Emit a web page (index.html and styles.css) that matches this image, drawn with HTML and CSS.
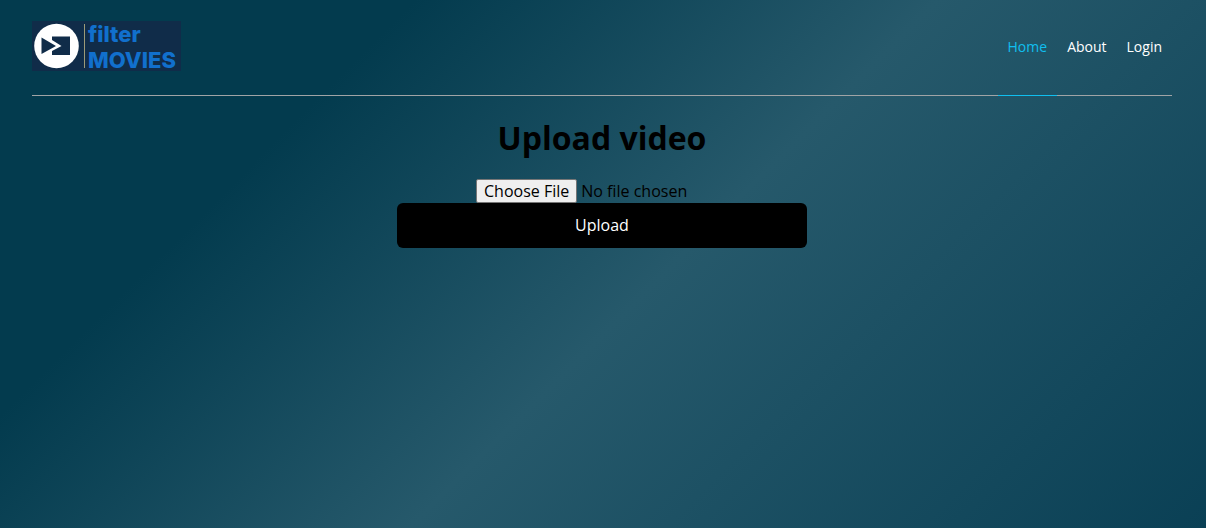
FILE: index.html
```html
<!DOCTYPE html>
<html lang="en">
<head>
<meta charset="utf-8">
<meta name="viewport" content="width=device-width, initial-scale=1">
<title>Upload video</title>
<link rel="stylesheet" href="styles.css">
</head>
<body>
<header class="header">
  <a class="logo" href="#" aria-label="Filter Movies">
    <svg width="149" height="50" viewBox="0 0 149 50">
      <rect class="logo-bg" width="149" height="50"/>
      <circle cx="24.500" cy="25" r="22.300" fill="#fff"/>
      <path class="logo-bg" d="M9.500 16.500 L24 25 L9.500 33 Z M20 15.500 H38 V34 H20 V30 L29.500 25 L20 19 Z"/>
      <path d="M52.500 3 V47" stroke="#9c9a78" stroke-width="1"/>
      <text class="logo-text" x="56" y="21">filter</text>
      <text class="logo-text" x="56" y="47">MOVIES</text>
    </svg>
  </a>
  <nav class="nav">
    <a class="nav-link nav-link-active" href="#">Home</a>
    <a class="nav-link" href="#">About</a>
    <a class="nav-link" href="#">Login</a>
  </nav>
</header>
<main class="main">
  <h1 class="title">Upload video</h1>
  <form class="form">
    <input class="file" type="file" aria-label="Video file">
    <button class="submit" type="button">Upload</button>
  </form>
</main>
</body>
</html>
```

FILE: styles.css
```css
* {
  box-sizing: border-box;
}

body {
  margin: 0;
  min-height: 100vh;
  padding: 0 34px 0 32px;
  font-family: "Open Sans", sans-serif;
  font-size: 16px;
  color: #000;
  background: linear-gradient(135deg, #033b4e 24%, #26596b 54%, #0a4055 100%);
}

.header {
  display: flex;
  justify-content: space-between;
  align-items: stretch;
  height: 96px;
  border-bottom: 1px solid #a0a4a6;
}

.logo {
  padding-top: 21px;
}

.logo svg {
  display: block;
  overflow: visible;
}

.logo-bg {
  fill: #102c49;
}

.logo-text {
  font-family: Inter, sans-serif;
  font-size: 22px;
  font-weight: 800;
  fill: #1170cd;
}

.nav {
  display: flex;
  margin-bottom: -1px;
}

.nav-link {
  display: flex;
  align-items: center;
  padding: 0 10px 2px;
  border-bottom: 1px solid transparent;
  font-size: 14px;
  font-weight: 500;
  color: #fff;
  text-decoration: none;
}

.nav-link-active {
  border-bottom-color: #10bfef;
  font-weight: 400;
  color: #10bfef;
}

.main {
  text-align: center;
}

.title {
  margin: 20px 0;
  font-size: 32px;
  font-weight: 700;
  line-height: 43px;
}

.form {
  display: flex;
  flex-direction: column;
  align-items: center;
}

.file {
  width: 252px;
  font: 400 16px/22px "Open Sans", sans-serif;
  color: #000;
}

.file::file-selector-button {
  height: 24px;
  padding: 0 7px;
  border: 1px solid #767676;
  border-radius: 2px;
  background: #efefef;
  font: inherit;
  color: #000;
}

.submit {
  width: 36%;
  min-width: 240px;
  padding: 11px 16px;
  border: 0;
  border-radius: 6px;
  background: #000;
  font: 400 16px/23px "Open Sans", sans-serif;
  color: #fff;
}
```
